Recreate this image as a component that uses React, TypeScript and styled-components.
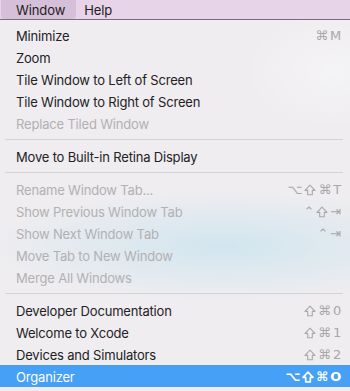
import React from 'react'
import styled, { createGlobalStyle } from 'styled-components'

const GlobalStyle = createGlobalStyle`
  *, *::before, *::after {
    box-sizing: border-box;
  }
  html, body {
    margin: 0;
    padding: 0;
    background: #efedf0;
  }
  body {
    font-family: Inter, 'Noto Sans', sans-serif;
    -webkit-font-smoothing: antialiased;
  }
`

type Entry =
  | { kind: 'item'; label: string; keys?: string; disabled?: boolean; selected?: boolean }
  | { kind: 'sep' }

const entries: Entry[] = [
  { kind: 'item', label: 'Minimize', keys: '⌘M' },
  { kind: 'item', label: 'Zoom' },
  { kind: 'item', label: 'Tile Window to Left of Screen' },
  { kind: 'item', label: 'Tile Window to Right of Screen' },
  { kind: 'item', label: 'Replace Tiled Window', disabled: true },
  { kind: 'sep' },
  { kind: 'item', label: 'Move to Built-in Retina Display' },
  { kind: 'sep' },
  { kind: 'item', label: 'Rename Window Tab...', keys: '⌥⇧⌘T', disabled: true },
  { kind: 'item', label: 'Show Previous Window Tab', keys: '⌃⇧⇥', disabled: true },
  { kind: 'item', label: 'Show Next Window Tab', keys: '⌃⇥', disabled: true },
  { kind: 'item', label: 'Move Tab to New Window', disabled: true },
  { kind: 'item', label: 'Merge All Windows', disabled: true },
  { kind: 'sep' },
  { kind: 'item', label: 'Developer Documentation', keys: '⇧⌘0' },
  { kind: 'item', label: 'Welcome to Xcode', keys: '⇧⌘1' },
  { kind: 'item', label: 'Devices and Simulators', keys: '⇧⌘2' },
  { kind: 'item', label: 'Organizer', keys: '⌥⇧⌘O', selected: true },
]

const Screen = styled.div`
  width: 350px;
  height: 391px;
  overflow: hidden;
  display: flex;
  flex-direction: column;
`

const MenuBar = styled.div`
  height: 20px;
  display: flex;
  align-items: stretch;
  padding-left: 1px;
  background: #e7d4e8;
  border-bottom: 1px solid #767078;
`

const MenuTitle = styled.div<{ $active?: boolean }>`
  display: flex;
  align-items: center;
  padding: 0 ${(p) => (p.$active ? '11px 0 15px' : '8px')};
  font-size: 13px;
  letter-spacing: -0.1px;
  color: #1f1c20;
  border-radius: 0 0 4px 4px;
  background: ${(p) => (p.$active ? '#d6c0d9' : 'transparent')};
`

const Panel = styled.div`
  flex: 1;
  padding: 4px 0 0;
  background:
    radial-gradient(ellipse 240px 55px at 64% 226px, rgba(208, 229, 239, 0.95), rgba(208, 229, 239, 0) 100%),
    radial-gradient(ellipse 90px 60px at 95% 50px, rgba(255, 255, 255, 0.35), rgba(255, 255, 255, 0) 100%),
    #efedf0;
`

const Row = styled.div<{ $disabled?: boolean; $selected?: boolean }>`
  height: 22px;
  display: flex;
  align-items: center;
  justify-content: space-between;
  padding: 1px 9px 0 16px;
  font-size: 13px;
  letter-spacing: -0.18px;
  color: ${(p) => (p.$selected ? '#ffffff' : p.$disabled ? '#b2b0b3' : '#232124')};
  background: ${(p) => (p.$selected ? '#45a0f6' : 'transparent')};
`

const Keys = styled.span<{ $selected?: boolean }>`
  display: flex;
  align-items: center;
  gap: 2px;
  font-family: 'DejaVu Sans', sans-serif;
  font-size: 13px;
  color: ${(p) => (p.$selected ? '#ffffff' : '#a9a7aa')};
  font-weight: ${(p) => (p.$selected ? 700 : 400)};
`

const ShiftIcon = styled.svg<{ $bold?: boolean }>`
  width: 12px;
  height: 12px;
  stroke: currentColor;
  stroke-width: ${(p) => (p.$bold ? 1.7 : 1.1)};
  fill: none;
  stroke-linejoin: round;
`

const Separator = styled.div`
  height: 11px;
  display: flex;
  align-items: center;
  padding: 0 7px 0 5px;

  &::after {
    content: '';
    flex: 1;
    height: 1px;
    background: #d4d2d5;
  }
`

function Shortcut({ keys, selected }: { keys: string; selected?: boolean }) {
  return (
    <Keys $selected={selected}>
      {Array.from(keys).map((k, i) =>
        k === '⇧' ? (
          <ShiftIcon key={i} viewBox="0 0 12 12" $bold={selected}>
            <path d="M6 1.2 L11 6.4 H8.3 V10.8 H3.7 V6.4 H1 Z" />
          </ShiftIcon>
        ) : (
          <span key={i}>{k}</span>
        )
      )}
    </Keys>
  )
}

export default function App() {
  return (
    <Screen>
      <GlobalStyle />
      <MenuBar>
        <MenuTitle $active>Window</MenuTitle>
        <MenuTitle>Help</MenuTitle>
      </MenuBar>
      <Panel>
        {entries.map((e, i) =>
          e.kind === 'sep' ? (
            <Separator key={i} />
          ) : (
            <Row key={i} $disabled={e.disabled} $selected={e.selected}>
              <span>{e.label}</span>
              {e.keys && <Shortcut keys={e.keys} selected={e.selected} />}
            </Row>
          )
        )}
      </Panel>
    </Screen>
  )
}
